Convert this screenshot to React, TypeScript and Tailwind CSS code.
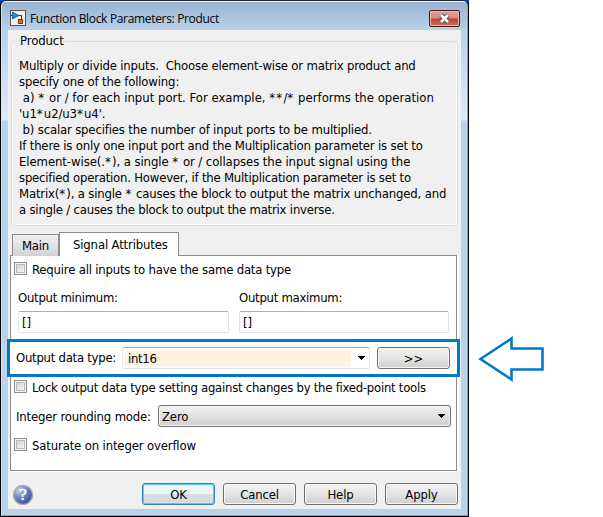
import React from "react";

const lines: { text: string; cls: string }[] = [
  { text: "Multiply or divide inputs.  Choose element-wise or matrix product and", cls: "tracking-[-0.186px]" },
  { text: "specify one of the following:", cls: "tracking-[-0.16px]" },
  { text: " a) * or / for each input port. For example, **/* performs the operation", cls: "tracking-[0.01px]" },
  { text: "'u1*u2/u3*u4'.", cls: "tracking-[-0.1px]" },
  { text: " b) scalar specifies the number of input ports to be multiplied.", cls: "tracking-[-0.17px]" },
  { text: "If there is only one input port and the Multiplication parameter is set to", cls: "tracking-[-0.18px]" },
  { text: "Element-wise(.*), a single * or / collapses the input signal using the", cls: "tracking-[-0.08px]" },
  { text: "specified operation. However, if the Multiplication parameter is set to", cls: "tracking-[-0.21px]" },
  { text: "Matrix(*), a single * causes the block to output the matrix unchanged, and", cls: "tracking-[-0.17px]" },
  { text: "a single / causes the block to output the matrix inverse.", cls: "tracking-[-0.21px]" },
];

// Asterisks are set a little wider than the surrounding text.
function Line({ text, cls }: { text: string; cls: string }) {
  return (
    <div className={cls}>
      {text.split(/(\*)/).map((part, i) =>
        part === "*" ? <span key={i} className="tracking-[1.2px]">*</span> : part
      )}
    </div>
  );
}

function Check({ label, className, textClass }: { label: string; className: string; textClass: string }) {
  return (
    <div className={`flex h-[13px] items-center ${className}`}>
      <span className="mr-[5px] h-[13px] w-[13px] shrink-0 border border-[#8e8f8f] bg-[#f4f4f4] p-px">
        <span className="block h-[9px] w-[9px] border border-[#b6babf] bg-linear-to-br from-[#cfd3d9] to-[#f6f6f6]" />
      </span>
      <span className={`pt-[3px] leading-4 ${textClass}`}>{label}</span>
    </div>
  );
}

function Button({ children, primary = false }: { children: React.ReactNode; primary?: boolean }) {
  return (
    <button
      className={`h-[22px] w-[73px] shrink-0 rounded-[3px] border pt-px text-center leading-[20px] tracking-[-0.15px] ${
        primary
          ? "border-[#3c7fb1] bg-linear-to-b from-[#f0f5f8] from-50% to-[#d3dde2] to-50% shadow-[inset_0_0_0_1px_#48d2f5]"
          : "border-[#707070] bg-linear-to-b from-[#f2f2f2] via-[#e4e4e4] to-[#cfcfcf] shadow-[inset_0_0_0_1px_#f6f6f6]"
      }`}
    >
      {children}
    </button>
  );
}

function Caret() {
  return (
    <svg width="7" height="4" viewBox="0 0 7 4" shapeRendering="crispEdges">
      <path d="M0 0H7L3.5 4Z" fill="#000" />
    </svg>
  );
}

function Field({ label, className }: { label: string; className: string }) {
  return (
    <div className={className}>
      <div className="h-[21px] leading-4 tracking-[-0.27px]">{label}</div>
      <div className="h-[22px] rounded-[2px] border border-[#e2e3ea] border-t-[#abadb3] pl-[3px] leading-[21px]">[]</div>
    </div>
  );
}

export default function App() {
  return (
    <div className="flex h-[517px] w-[603px] overflow-hidden bg-white font-['DejaVu_Sans_Condensed','DejaVu_Sans',sans-serif] text-[13px] whitespace-pre text-black [font-stretch:condensed]">
      <div className="h-[517px] w-[469px] shrink-0 bg-linear-to-b from-[#0b4a9c] from-0% to-black to-6%">
        <div className="flex h-full flex-col rounded-t-[6px] border border-t-[#20222c] border-r-black border-b-black border-l-black">
          <div className="flex min-h-0 flex-1 flex-col rounded-t-[5px] border border-t-[#e9f1f8] border-r-[#35c9ea] border-b-[#21d2e9] border-l-[#d5e3f1] bg-[linear-gradient(to_bottom,#99b4d1_0px,#b9d1ea_28px,#e0eaf5_118px,#bad2eb_119px)]">
            <div className="flex h-[28px] shrink-0 items-start pl-2 pr-[7px] pt-2">
              <svg width="16" height="16" viewBox="0 0 16 16">
                <rect x=".5" y=".5" width="15" height="15" fill="#eee" stroke="#555" />
                <path d="M1 5.5H3M8 5.5H11.5V9" fill="none" stroke="#333" />
                <path d="M2.5 2L9 5.5L2.5 9Z" fill="#2a8cc8" stroke="#165b91" strokeWidth=".8" />
                <rect x="8.5" y="9.5" width="4" height="4" fill="#e6602b" stroke="#9b2d0b" />
              </svg>
              <span className="ml-1 font-['Open_Sans',sans-serif] text-[12px] leading-[17px] tracking-[-0.33px] [font-stretch:normal]">Function Block Parameters: Product</span>
              <div className="ml-auto flex h-[17px] w-[31px] items-center justify-center rounded-[2px] border border-[#4b1820] bg-[linear-gradient(to_bottom,#e3a496_0%,#d98878_48%,#b9412e_52%,#d0705a_100%)] shadow-[inset_0_0_0_1px_#e8b3a9]">
                <svg width="13" height="11" viewBox="0 0 13 11">
                  <path d="M3 2L10 9M10 2L3 9" stroke="#535666" strokeWidth="4.6" />
                  <path d="M3 2L10 9M10 2L3 9" stroke="#fff" strokeWidth="2.6" />
                </svg>
              </div>
            </div>

            <div className="mx-[6px] flex h-[479px] flex-col bg-[#f0f0f0]">
              <fieldset className="mx-[3px] mt-[3px] h-[193px] min-w-0 rounded-[4px] border border-[#d5dfe5] px-[7px] shadow-[inset_-1px_-1px_0_#fff,inset_1px_0_0_#fff]">
                <legend className="h-4 px-px leading-4 tracking-[-0.1px]">Product</legend>
                <div className="mt-[9px] leading-4">
                  {lines.map((l) => (
                    <Line key={l.text} text={l.text} cls={l.cls} />
                  ))}
                </div>
              </fieldset>

              <div className="z-10 mt-[6px] flex h-[24px] items-end pl-1">
                <div className="h-[22px] w-[47px] border border-b-0 border-[#898c95] bg-linear-to-b from-[#f2f2f2] to-[#d2d2d2] pl-[9px] leading-[22px] tracking-[-0.25px]">Main</div>
                <div className="h-[24px] w-[120px] border border-b-0 border-[#898c95] bg-white pl-[13px] leading-[23px] tracking-[-0.16px]">Signal Attributes</div>
              </div>

              <div className="-mt-px ml-[2px] mr-[2px] flex h-[217px] flex-col border-r-2 border-b border-white">
                <div className="flex h-[216px] flex-col border border-[#898c95] bg-white pt-[6px]">
                  <Check label="Require all inputs to have the same data type" className="pl-[3px]" textClass="tracking-[-0.2px]" />
                  <div className="mt-[15px] flex gap-[10px] pl-[7px]">
                    <Field label="Output minimum:" className="w-[211px]" />
                    <Field label="Output maximum:" className="w-[210px]" />
                  </div>
                  <div className="z-10 -mr-[4px] -ml-[4px] mt-[6px] flex h-[38px] shrink-0 items-center border-3 border-[#0178c8] bg-white pl-[6px] pr-[7px]">
                    <span className="w-[106px] tracking-[-0.26px]">Output data type:</span>
                    <div className="flex h-[22px] w-[248px] items-center rounded-[2px] border border-[#e2e3ea] border-t-[#abadb3] pl-[2px]">
                      <div className="h-4 w-[226px] bg-[#fff3e0] pl-[3px] leading-[17px] tracking-[-0.3px]">int16</div>
                      <span className="ml-[7px] flex"><Caret /></span>
                    </div>
                    <div className="ml-[7px] flex"><Button>&gt;&gt;</Button></div>
                  </div>
                  <Check label="Lock output data type setting against changes by the fixed-point tools" className="mt-[3px] pl-[3px]" textClass="tracking-[-0.26px]" />
                  <div className="mt-[12px] flex h-[22px] items-center pl-[5px]">
                    <span className="w-[142px] pt-px tracking-[-0.17px]">Integer rounding mode:</span>
                    <div className="flex h-[22px] w-[293px] items-center justify-between rounded-[3px] border border-[#707070] bg-linear-to-b from-[#f2f2f2] to-[#cfcfcf] pr-[5px] pl-[3px] shadow-[inset_0_0_0_1px_#f6f6f6]">
                      <span className="pt-px tracking-[-0.15px]">Zero</span>
                      <Caret />
                    </div>
                  </div>
                  <Check label="Saturate on integer overflow" className="mt-[11px] pl-[3px]" textClass="tracking-[-0.15px]" />
                </div>
              </div>

              <div className="mt-[11px] flex h-[22px] items-center gap-2 pl-1">
                <svg width="22" height="22" viewBox="0 0 22 22" className="mr-[100px]">
                  <defs>
                    <radialGradient id="help" cx=".3" cy=".25" r=".85">
                      <stop offset="0" stopColor="#c3cde9" />
                      <stop offset=".5" stopColor="#6c83bf" />
                      <stop offset="1" stopColor="#2c468f" />
                    </radialGradient>
                  </defs>
                  <circle cx="11" cy="12" r="9.5" fill="url(#help)" stroke="#a5a9b2" strokeWidth="1.4" />
                  <text x="11" y="17" textAnchor="middle" fontSize="17" fill="#fff" stroke="#fff" strokeWidth=".4" fontFamily="Liberation Serif">?</text>
                </svg>
                <Button primary>OK</Button>
                <Button>Cancel</Button>
                <Button>Help</Button>
                <Button>Apply</Button>
              </div>
            </div>
          </div>
        </div>
      </div>

      <svg width="70" height="50" viewBox="0 0 70 50" className="ml-[9px] mt-[334px]">
        <path d="M2.5 25L33.5 4.5V14.5H64.5V35.5H33.5V45.5Z" fill="#fff" stroke="#0178c8" strokeWidth="2.6" />
      </svg>
    </div>
  );
}
